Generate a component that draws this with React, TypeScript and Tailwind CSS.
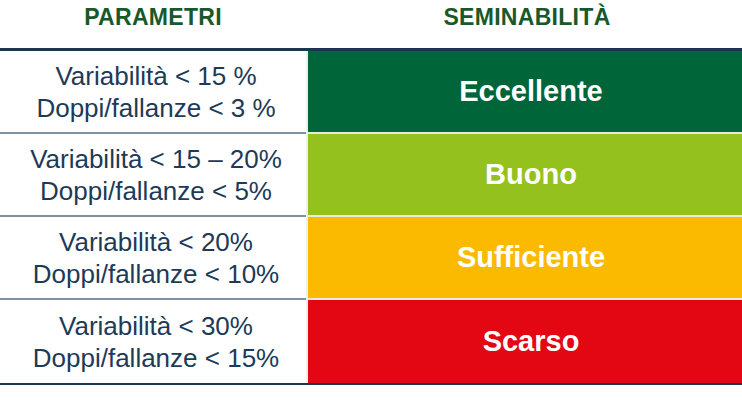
const rows = [
  { a: 'Variabilità < 15 %', b: 'Doppi/fallanze < 3 %', label: 'Eccellente', bg: 'bg-[#00663a]' },
  { a: 'Variabilità < 15 – 20%', b: 'Doppi/fallanze < 5%', label: 'Buono', bg: 'bg-[#95c11f]' },
  { a: 'Variabilità < 20%', b: 'Doppi/fallanze < 10%', label: 'Sufficiente', bg: 'bg-[#fbba00]' },
  { a: 'Variabilità < 30%', b: 'Doppi/fallanze < 15%', label: 'Scarso', bg: 'bg-[#e30613]' },
]

export default function App() {
  return (
    <div className="w-[742px] h-[419px] bg-white font-['Liberation_Sans',Arial,sans-serif]">
      <div className="grid grid-cols-[306px_436px] h-[48px]">
        <div className="text-center text-[23px] font-bold leading-[34px] text-[#17592a] tracking-[0.3px]">PARAMETRI</div>
        <div className="text-center text-[23px] font-bold leading-[34px] text-[#17592a] tracking-[0.3px] pl-[6px]">SEMINABILITÀ</div>
      </div>
      <div className="border-t-[3px] border-b-[2px] border-[#1b3651]">
        {rows.map((r, i) => {
          const last = i === rows.length - 1
          return (
            <div key={r.label} className="grid grid-cols-[306px_434px] gap-[2px] bg-[#eef0ee]">
              <div
                className={`h-[83px] bg-white pl-[6px] flex flex-col items-center justify-center text-[26px] leading-[32px] text-[#1d3a57] ${last ? '' : 'border-b-2 border-[#7f91a3]'}`}
              >
                <div>{r.a}</div>
                <div>{r.b}</div>
              </div>
              <div
                className={`h-[83px] ${r.bg} pl-[12px] flex items-center justify-center text-white text-[29px] font-bold ${last ? '' : 'border-b-2 border-[#e8ecdf]'}`}
              >
                {r.label}
              </div>
            </div>
          )
        })}
      </div>
    </div>
  )
}
